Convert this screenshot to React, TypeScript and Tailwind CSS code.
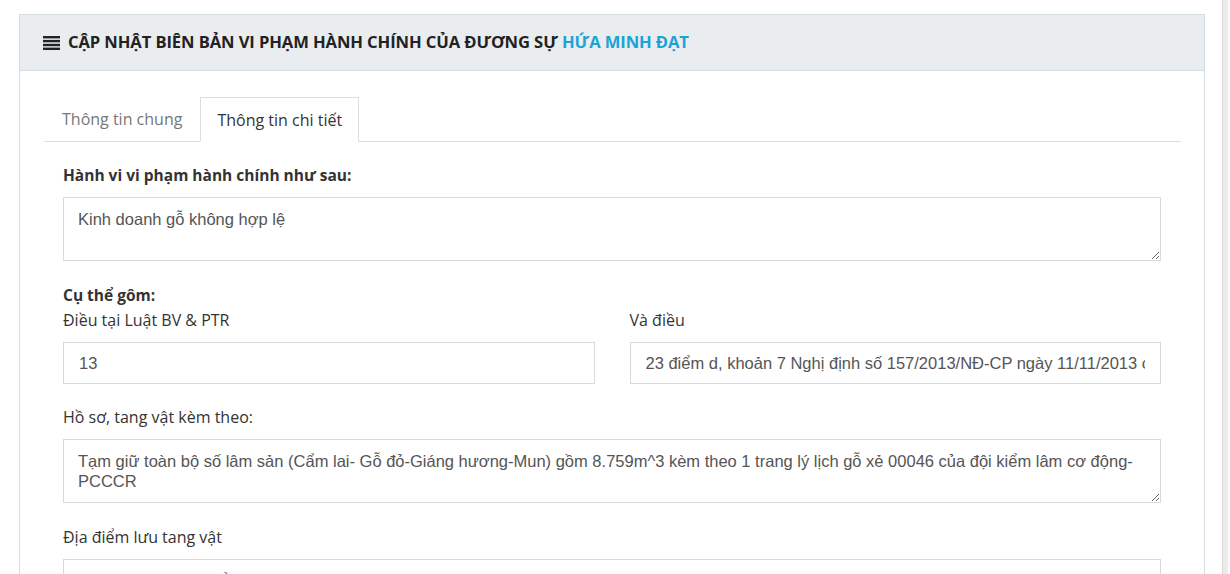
import React from 'react';

const sans = "font-['Open_Sans',sans-serif]";
const arial = "font-['Liberation_Sans',Arial,sans-serif]";

function BarsIcon() {
  return (
    <svg width="17" height="14" viewBox="0 0 17 14" className="shrink-0">
      <rect x="0" y="0" width="17" height="2.4" fill="#222" />
      <rect x="0" y="3.9" width="17" height="2.4" fill="#222" />
      <rect x="0" y="7.8" width="17" height="2.4" fill="#222" />
      <rect x="0" y="11.6" width="17" height="2.4" fill="#222" />
    </svg>
  );
}

function Field({ label, bold, children }: { label: string; bold?: boolean; children: React.ReactNode }) {
  return (
    <div>
      <div
        className={`leading-[20px] mb-[12px] text-[#333] ${bold ? 'font-bold text-[15.5px]' : 'text-[16px]'}`}
      >
        {label}
      </div>
      {children}
    </div>
  );
}

function TextBox({ value }: { value: string }) {
  return (
    <textarea
      readOnly
      defaultValue={value}
      className={`${arial} block w-full h-[64px] border border-[#d9d9d9] bg-white px-[14px] pt-[11px] pb-[6px] text-[16.5px] leading-[20px] text-[#555] resize-y outline-none overflow-hidden`}
    />
  );
}

function Input({ value }: { value: string }) {
  return (
    <input
      readOnly
      value={value}
      className={`${arial} block w-full h-[42px] border border-[#d9d9d9] bg-white px-[15px] text-[16.5px] text-[#555] outline-none`}
    />
  );
}

export default function App() {
  return (
    <div className={`${sans} min-h-screen bg-white flex`}>
      <div className="flex-1 pl-[19px] pt-[14px] pr-[17px]">
        <div className="border border-[#d5dee3] border-b-0 bg-white">
          {/* Header */}
          <div className="h-[56px] bg-[#eaedf0] border-b border-[#d5dee3] flex items-center pl-[23px] gap-[8px]">
            <BarsIcon />
            <h1 className="text-[16.6px] font-bold text-[#222] tracking-[-0.1px]">
              CẬP NHẬT BIÊN BẢN VI PHẠM HÀNH CHÍNH CỦA ĐƯƠNG SỰ <span className="text-[#1ba3d8]">HỨA MINH ĐẠT</span>
            </h1>
          </div>

          {/* Body */}
          <div className="pl-[24px] pr-[23px] pt-[26px] pb-[20px]">
            <div className="flex border-b border-[#dddddd]">
              <div className="h-[44px] px-[18px] flex items-center text-[16px] text-[#777]">Thông tin chung</div>
              <div className="h-[45px] -mb-px px-[16px] flex items-center text-[16px] text-[#333] border border-[#dddddd] border-b-white bg-white">
                Thông tin chi tiết
              </div>
            </div>

            <div className="pl-[19px] pr-[20px] pt-[23px] flex flex-col">
              <Field label="Hành vi vi phạm hành chính như sau:" bold>
                <TextBox value="Kinh doanh gỗ không hợp lệ" />
              </Field>

              <div className="mt-[24px] text-[15.5px] font-bold text-[#333] leading-[20px]">Cụ thể gôm:</div>
              <div className="mt-[5px] grid grid-cols-2 gap-x-[35px]">
                <Field label="Điều tại Luật BV & PTR">
                  <Input value="13" />
                </Field>
                <Field label="Và điều">
                  <Input value="23 điểm d, khoản 7 Nghị định số 157/2013/NĐ-CP ngày 11/11/2013 của Chính phủ" />
                </Field>
              </div>

              <div className="mt-[23px]">
                <Field label="Hồ sơ, tang vật kèm theo:">
                  <TextBox value="Tạm giữ toàn bộ số lâm sản (Cẩm lai- Gỗ đỏ-Giáng hương-Mun) gồm 8.759m^3 kèm theo 1 trang lý lịch gỗ xẻ 00046 của đội kiểm lâm cơ động-PCCCR" />
                </Field>
              </div>

              <div className="mt-[24px]">
                <Field label="Địa điểm lưu tang vật">
                  <Input value="Kho tang vật Hạt kiểm lâm" />
                </Field>
              </div>
            </div>
          </div>
        </div>
      </div>
      <div className="w-[6px] shrink-0 border-l border-[#d7d7d7] bg-[#ececec] mr-[2px]" />
    </div>
  );
}
